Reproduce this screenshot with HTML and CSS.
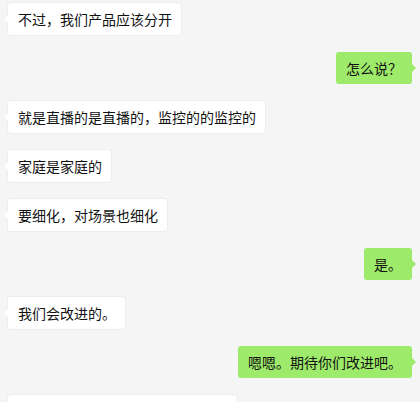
FILE: index.html
```html
<!DOCTYPE html>
<html lang="zh-CN">
<head>
    <meta charset="UTF-8">
    <meta name="viewport" content="width=device-width, initial-scale=1.0">
    <title>聊天记录</title>
    <link rel="stylesheet" href="styles.css">
</head>
<body>
    <div class="chat">
        <div class="row left"><div class="bubble">不过，我们产品应该分开</div></div>
        <div class="row right"><div class="bubble">怎么说？</div></div>
        <div class="row left"><div class="bubble">就是直播的是直播的，监控的的监控的</div></div>
        <div class="row left"><div class="bubble">家庭是家庭的</div></div>
        <div class="row left"><div class="bubble">要细化，对场景也细化</div></div>
        <div class="row right"><div class="bubble">是。</div></div>
        <div class="row left"><div class="bubble">我们会改进的。</div></div>
        <div class="row right"><div class="bubble">嗯嗯。期待你们改进吧。</div></div>
        <div class="row left"><div class="bubble">好的，我们会尽快把这个功能分开</div></div>
    </div>
</body>
</html>
```

FILE: styles.css
```css
html, body {
    margin: 0;
    height: 100%;
    background-color: #f5f5f5;
    overflow: hidden;
}
.chat {
    display: flex;
    flex-direction: column;
    gap: 17px;
    padding: 3px 8px 0 8px;
    font-family: "Noto Sans CJK SC", "Microsoft YaHei", sans-serif;
    font-size: 14px;
    color: #111;
}
.row {
    display: flex;
}
.row.left { justify-content: flex-start; }
.row.right { justify-content: flex-end; }
.bubble {
    position: relative;
    height: 32px;
    line-height: 32px;
    padding: 0 9px 0 10px;
    border-radius: 3px;
    white-space: nowrap;
}
.left .bubble {
    background-color: #fff;
    box-shadow: 0 0 0 1px #ededed;
}
.right .bubble {
    background-color: #9eea6a;
    padding: 0 10px;
}
.bubble::before {
    content: "";
    position: absolute;
    top: 12px;
    border: 4px solid transparent;
}
.left .bubble::before {
    left: -8px;
    border-right-color: #fff;
}
.right .bubble::before {
    right: -8px;
    border-left-color: #9eea6a;
}
```
